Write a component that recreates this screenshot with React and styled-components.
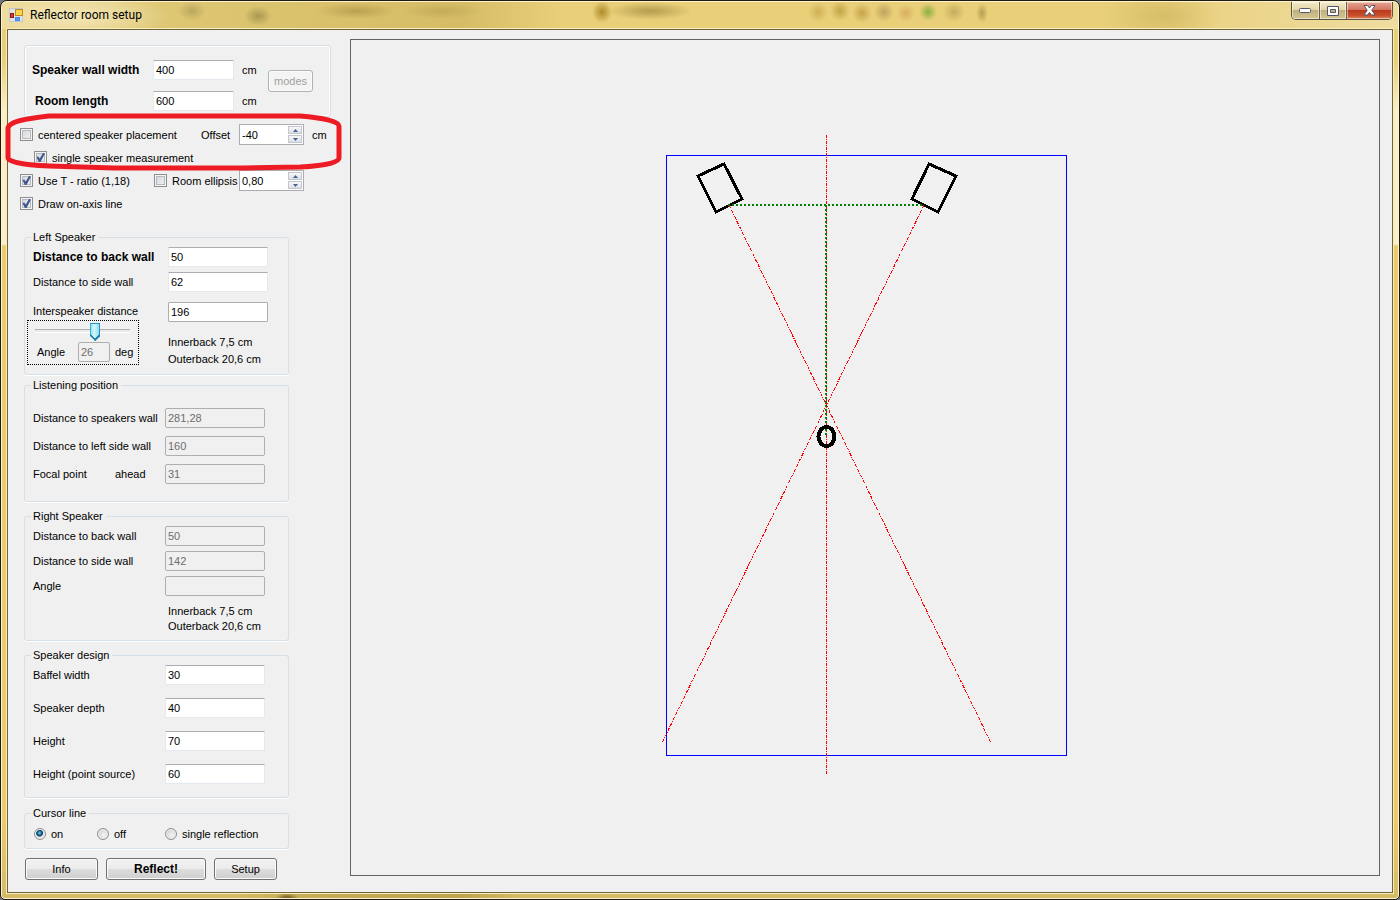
import React, {useState} from 'react'
import styled, {createGlobalStyle} from 'styled-components'

const colors = {
    face: '#f0f0f0',
    groupLine: '#d5dfe5',
    inputTop: '#abadb3',
    inputSide: '#e3e9ef',
    disabledLine: '#afafaf',
    disabledText: '#6d6d6d',
    marker: '#ed1c24',
    canvasLine: '#646464',
}

const GlobalStyle = createGlobalStyle`
  * {
    box-sizing: border-box;
  }

  body {
    margin: 0;
    background: #6f7780;
    font-family: "Liberation Sans", Arial, sans-serif;
    font-size: 11px;
    line-height: 14px;
    color: #000;
  }

  input, button {
    font: inherit;
    color: inherit;
    margin: 0;
  }
`

const Window = styled.div`
  display: flex;
  flex-direction: column;
  min-height: 100vh;
  padding: 0 6px 6px;
  border: 1px solid #1f1b10;
  border-radius: 7px 7px 5px 5px;
  box-shadow: inset 0 0 0 1px #fdf3d0;
  background:
    radial-gradient(ellipse 12px 6px at 286px 100%, #5e4a14, transparent),
    linear-gradient(90deg, transparent 230px, #c9ae58 290px, #bfa34f 460px, transparent 520px) 0 100% / 100% 7px no-repeat,
    linear-gradient(#e6cd7a 0, #e9d07a 60px, #fbeecb 110px, #fbeecb 243px, #eccb6e 245px, #eccb6e 820px, #d5bb66 100%);
`
// glass caption, what lies behind the window shows through as faint spots
const TitleBar = styled.header`
  display: flex;
  align-items: flex-start;
  height: 28px;
  margin: 0 -5px;
  padding: 0 5px 0 6px;
  border-radius: 6px 6px 0 0;
  border-top: 1px solid #fdf3d0;
  background:
    radial-gradient(ellipse 100px 26px at 70px 14px, #f3e6b8, rgba(243, 230, 184, 0)),
    radial-gradient(ellipse 14px 10px at 190px 9px, rgba(120, 110, 60, 0.35), transparent),
    radial-gradient(ellipse 14px 10px at 256px 14px, rgba(110, 100, 50, 0.45), transparent),
    radial-gradient(ellipse 40px 8px at 354px 9px, rgba(130, 105, 40, 0.35), transparent),
    radial-gradient(ellipse 40px 8px at 440px 9px, rgba(130, 105, 40, 0.2), transparent),
    radial-gradient(ellipse 10px 11px at 600px 10px, rgba(150, 110, 10, 0.7), transparent),
    radial-gradient(ellipse 42px 9px at 648px 9px, rgba(130, 105, 40, 0.5), transparent),
    radial-gradient(ellipse 10px 10px at 816px 10px, rgba(160, 120, 20, 0.35), transparent),
    radial-gradient(ellipse 10px 10px at 838px 9px, rgba(160, 120, 20, 0.5), transparent),
    radial-gradient(ellipse 10px 10px at 860px 11px, rgba(160, 110, 20, 0.45), transparent),
    radial-gradient(ellipse 10px 10px at 882px 10px, rgba(140, 110, 60, 0.45), transparent),
    radial-gradient(ellipse 9px 9px at 904px 11px, rgba(190, 110, 50, 0.35), transparent),
    radial-gradient(ellipse 9px 9px at 926px 10px, rgba(100, 160, 40, 0.7), transparent),
    radial-gradient(ellipse 11px 10px at 952px 10px, rgba(130, 110, 50, 0.35), transparent),
    radial-gradient(ellipse 6px 10px at 980px 11px, rgba(130, 110, 40, 0.5), transparent),
    radial-gradient(ellipse 60px 30px at 1160px 14px, #d6bd66, rgba(214, 189, 102, 0)),
    linear-gradient(90deg, #ecd995, #dec773 160px, #d5bc65 460px, #e8cf78 560px, #e8cf78 1100px, #efdca0);
`
const AppIcon = styled.svg`
  width: 16px;
  height: 16px;
  margin: 5px 5px 0 1px;
`
const Title = styled.h1`
  flex: 1;
  margin: 4px 0 0;
  font-family: Roboto, sans-serif;
  font-weight: normal;
  font-size: 12px;
  line-height: 18px;
`
const WindowButtons = styled.div`
  display: flex;
  height: 18px;
  border: 1px solid #5c5540;
  border-top: 0;
  border-radius: 0 0 5px 5px;
  overflow: hidden;
`
const WindowButton = styled.button`
  display: flex;
  align-items: center;
  justify-content: center;
  width: ${(props) => props.$close ? '46px' : '27px'};
  padding: 0;
  border: 0;
  border-left: ${(props) => props.$first ? '0' : '1px solid #6b6042'};
  box-shadow: inset 0 0 0 1px rgba(255, 255, 255, 0.5);
  background: ${(props) => props.$close
      ? 'linear-gradient(#e5a594, #d47560 45%, #b93a1d 50%, #c9502d 80%, #e08a60)'
      : 'linear-gradient(#f3e9c9, #e3d5a6 45%, #bfb07c 50%, #d5c794)'};
`

const Client = styled.main`
  flex: 1;
  display: flex;
  border: 1px solid #6f6534;
  box-shadow: 0 0 0 1px #f8ecc0;
  background: ${colors.face};
`
const Sidebar = styled.form`
  flex: none;
  width: 342px;
  padding: 15px 0 12px 12px;
`
const RoomBox = styled.section`
  display: flex;
  align-items: center;
  width: 307px;
  height: 72px;
  margin-left: 4px;
  padding-left: 7px;
  border: 1px solid ${colors.groupLine};
  border-radius: 3px;
  box-shadow: inset 0 0 0 1px #fff;
`
const RoomFields = styled.div`
  display: grid;
  grid-template-columns: 121px 81px 34px;
  align-items: center;
  row-gap: 11px;
  padding-top: 8px;
`
const Unit = styled.span`
  padding-left: 8px;
`
const Label = styled.label`
  font-size: ${(props) => props.$bold ? '12px' : '11px'};
  font-weight: ${(props) => props.$bold ? 'bold' : 'normal'};
  padding-left: ${(props) => props.$indent ? '3px' : '0'};
  white-space: nowrap;
`
const TextBox = styled.input`
  width: ${(props) => props.$width || '100px'};
  height: 20px;
  padding: 0 2px;
  border: 1px solid ${colors.inputSide};
  border-top-color: ${colors.inputTop};
  border-radius: 1px;
  background: #fff;
  ${(props) => props.$strong && `border-color: ${colors.inputTop};`}

  &:disabled {
    border-color: ${colors.disabledLine};
    border-radius: 2px;
    background: ${colors.face};
    color: ${colors.disabledText};
  }
`
const Button = styled.button`
  width: ${(props) => props.$width};
  height: 22px;
  padding: 0;
  border: 1px solid #707070;
  border-radius: 3px;
  box-shadow: inset 0 0 0 1px #fbfbfb;
  background: linear-gradient(#f2f2f2, #ebebeb 50%, #dddddd 50%, #cfcfcf);
  font-size: ${(props) => props.$bold ? '12px' : '11px'};
  font-weight: ${(props) => props.$bold ? 'bold' : 'normal'};

  &:disabled {
    border-color: #adb2b5;
    background: #f4f4f4;
    color: #a0a0a0;
  }
`

const Options = styled.section`
  position: relative;
  padding-top: 6px;
`
const OptionRow = styled.div`
  display: flex;
  align-items: center;
  height: 23px;
  padding-left: ${(props) => props.$indent ? '14px' : '0'};
`
const CheckLabel = styled.label`
  display: flex;
  align-items: center;
  gap: 5px;
  width: ${(props) => props.$width || 'auto'};
  white-space: nowrap;
`
const CheckBox = styled.input.attrs({type: 'checkbox'})`
  appearance: none;
  flex: none;
  width: 13px;
  height: 13px;
  border: 1px solid #8e8f8f;
  box-shadow: inset 0 0 0 1px #f4f4f4, inset 0 0 0 2px #b5bac0;
  background: linear-gradient(135deg, #cfd3d8, #f6f6f6);

  &:checked::after {
    content: '';
    display: block;
    width: 9px;
    height: 9px;
    margin: 1px;
    background: #42568f;
    clip-path: polygon(5% 45%, 25% 40%, 42% 62%, 78% 0, 100% 5%, 50% 100%, 32% 100%);
  }
`
const OffsetLabel = styled.label`
  width: 38px;
`
const SpinBox = styled.div`
  display: flex;
  width: 65px;
  height: 21px;
  padding: 1px;
  border: 1px solid ${colors.inputTop};
  background: #fff;
`
const SpinInput = styled.input`
  flex: 1;
  min-width: 0;
  padding: 0 1px;
  border: 0;
  background: transparent;
`
const SpinButtons = styled.div`
  display: flex;
  flex-direction: column;
  gap: 1px;
  width: 14px;
`
const SpinButton = styled.button`
  flex: 1;
  display: flex;
  align-items: center;
  justify-content: center;
  padding: 0;
  border: 1px solid #c3c6cb;
  background: linear-gradient(#f8f8f8, #dcdfe4);
`
// hand drawn marker around the offset rows
const Marker = styled.svg`
  position: absolute;
  top: -5px;
  left: -16px;
  width: 340px;
  height: 60px;
  pointer-events: none;
`

const Group = styled.fieldset`
  width: 265px;
  min-height: ${(props) => props.$height};
  margin: ${(props) => props.$gap} 0 0 4px;
  padding: 0 0 0 2px;
  border: 1px solid ${colors.groupLine};
  border-radius: 3px;
  box-shadow: 0 1px 0 #fff;
`
const Legend = styled.legend`
  margin-left: 4px;
  padding: 0 3px 0 2px;
  line-height: 14px;
`
const Fields = styled.div`
  display: grid;
  grid-template-columns: ${(props) => props.$labelWidth || '132px'} 100px;
  align-items: center;
  row-gap: ${(props) => props.$gap || '5px'};
  padding: ${(props) => props.$top || '3px'} 0 0 6px;
`
const SplitLabel = styled.div`
  display: grid;
  grid-template-columns: 82px auto;
`
const Interspeaker = styled.div`
  display: flex;
  justify-content: space-between;
  width: 241px;
  padding-top: 10px;
`
const AngleColumn = styled.div`
  display: flex;
  flex-direction: column;
  width: 112px;

  > label {
    padding-left: 6px;
    line-height: 18px;
  }
`
const AnglePanel = styled.div`
  height: 45px;
  padding: 1px 7px 0;
  border: 1px dotted #000;
`
const AngleRow = styled.div`
  display: grid;
  grid-template-columns: 41px 37px auto;
  align-items: center;
  padding-left: 2px;
`
const Slider = styled.input.attrs({type: 'range'})`
  appearance: none;
  display: block;
  width: 95px;
  height: 20px;
  background: linear-gradient(#b0b0b0, #b0b0b0 1px, #e7eaea 1px, #e7eaea 3px, #fff 3px) 0 7px / 100% 4px no-repeat;

  &::-webkit-slider-thumb {
    appearance: none;
    width: 10px;
    height: 18px;
    background:
      linear-gradient(45deg, #1f7fb0 5px, transparent 5px),
      linear-gradient(315deg, #1f7fb0 5px, transparent 5px),
      linear-gradient(90deg, #2b8fc0 1px, #7fe9f7 1px, #d9f6fc 4px, #8bdcf2 9px, #2b8fc0 9px);
    box-shadow: inset 0 1px 0 #2b8fc0;
    clip-path: polygon(0 0, 100% 0, 100% 13px, 50% 100%, 0 13px);
  }
`
const BackNotes = styled.div`
  grid-column: 2;
  padding: ${(props) => props.$top || '0'} 0 0 ${(props) => props.$indent || '0'};
  line-height: ${(props) => props.$line};
  white-space: nowrap;
`
const RadioRow = styled.div`
  display: grid;
  grid-template-columns: 63px 68px auto;
  padding: 7px 0 0 7px;
`
const Radio = styled.input.attrs({type: 'radio'})`
  appearance: none;
  width: 12px;
  height: 12px;
  border: 1px solid #8e8f8f;
  border-radius: 50%;
  box-shadow: inset 0 0 0 1px #f4f4f4;
  background: radial-gradient(circle at 60% 60%, #f4f4f4, #c2c6ca);

  &:checked {
    background: radial-gradient(circle at 45% 40%, #6fd0f5 0, #1a6c9e 2px, #0f3554 3px, #dfe4e8 4px);
  }
`
const ButtonRow = styled.div`
  display: flex;
  gap: 8px;
  padding: 9px 0 0 5px;
`

const CanvasPane = styled.section`
  flex: 1;
  display: flex;
  min-width: 0;
  margin: 9px 12px 16px 0;
  border: 1px solid ${colors.canvasLine};
`
const RoomPlot = styled.svg`
  flex: 1;
  width: 100%;
  min-width: 0;
`

const Spinner = ({id, initial, step, digits}) => {
    const [value, setValue] = useState(initial)

    const change = (delta) => {
        const next = parseFloat(value.replace(',', '.')) + delta
        setValue(next.toFixed(digits).replace('.', ','))
    }

    return (
        <SpinBox>
            <SpinInput
                id={id}
                aria-label={id}
                value={value}
                onChange={(e) => setValue(e.target.value)}
            />
            <SpinButtons>
                <SpinButton type="button" aria-label="Increase" onClick={() => change(step)}>
                    <svg width="5" height="3"><path d="M0 3L2.5 0L5 3z" fill="#4a5f97"/></svg>
                </SpinButton>
                <SpinButton type="button" aria-label="Decrease" onClick={() => change(-step)}>
                    <svg width="5" height="3"><path d="M0 0L2.5 3L5 0z" fill="#4a5f97"/></svg>
                </SpinButton>
            </SpinButtons>
        </SpinBox>
    )
}

const Field = ({id, label, value, bold, disabled}) => (
    <>
        <Label htmlFor={id} $bold={bold}>{label}</Label>
        <TextBox id={id} defaultValue={value} disabled={disabled}/>
    </>
)

const TitleIcons = {
    app: (
        <AppIcon viewBox="0 0 16 16">
            <rect x="0.5" y="1.5" width="13" height="13" fill="#dfe3ea" stroke="#c3c8d0"/>
            <rect x="6.5" y="2.5" width="7" height="6" fill="#fbd54a" stroke="#c28a14"/>
            <rect x="1.5" y="6.5" width="3" height="4" fill="#d8402a" stroke="#8f1c10"/>
            <rect x="6.5" y="10.5" width="4" height="3" fill="#5b9bf0" stroke="#4a86e0"/>
        </AppIcon>
    ),
    minimize: (
        <svg width="13" height="6">
            <rect x="0.5" y="0.5" width="11" height="4" rx="1" fill="#fff" stroke="#535666"/>
        </svg>
    ),
    maximize: (
        <svg width="12" height="10">
            <path
                d="M0.5 0.5h11v9h-11zM3.5 3.5v3h5v-3z"
                fill="#fff"
                fillRule="evenodd"
                stroke="#535666"
            />
        </svg>
    ),
    close: (
        <svg width="13" height="11">
            <path
                d="M1 0.5h3.5l2 2.5l2-2.5h3.5l-3.2 4.7l3.2 4.8h-3.5l-2-2.6l-2 2.6h-3.5l3.2-4.8z"
                fill="#fff"
                stroke="#535666"
            />
        </svg>
    ),
}

// one unit of the plot is one centimetre, origin in the upper left room corner
const Plot = () => (
    <RoomPlot viewBox="-315 -115 1028 835" fill="none" shapeRendering="crispEdges">
        <rect x="0.5" y="0.5" width="400" height="600" stroke="#0000ff"/>
        <path d="M32 21L58 9L76 44L50 57z" stroke="#000" strokeWidth="3"/>
        <path d="M263 9L290 21L272 57L246 44z" stroke="#000" strokeWidth="3"/>
        <path d="M62 50H258" stroke="#008000" strokeWidth="2" strokeDasharray="2 2"/>
        <g stroke="#ff0000" strokeDasharray="3 1 1 1">
            <path d="M160.5 -20V619"/>
            <path d="M63 50L325 588"/>
            <path d="M258 50L-4 588"/>
        </g>
        <path d="M160 50V281" stroke="#008000" strokeWidth="2" strokeDasharray="2 2"/>
        <ellipse cx="160.5" cy="281.5" rx="8" ry="9.5" stroke="#000" strokeWidth="4"/>
    </RoomPlot>
)

const App = () => {
    const [angle, setAngle] = useState(26)

    return (
        <>
            <GlobalStyle/>
            <Window>
                <TitleBar>
                    {TitleIcons.app}
                    <Title>Reflector room setup</Title>
                    <WindowButtons>
                        <WindowButton $first aria-label="Minimize">{TitleIcons.minimize}</WindowButton>
                        <WindowButton aria-label="Maximize">{TitleIcons.maximize}</WindowButton>
                        <WindowButton $close aria-label="Close">{TitleIcons.close}</WindowButton>
                    </WindowButtons>
                </TitleBar>
                <Client>
                    <Sidebar onSubmit={(e) => e.preventDefault()}>
                        <RoomBox>
                            <RoomFields>
                                <Label htmlFor="wallWidth" $bold>Speaker wall width</Label>
                                <TextBox id="wallWidth" defaultValue="400" $width="81px"/>
                                <Unit>cm</Unit>
                                <Label htmlFor="roomLength" $bold $indent>Room length</Label>
                                <TextBox id="roomLength" defaultValue="600" $width="81px"/>
                                <Unit>cm</Unit>
                            </RoomFields>
                            <Button type="button" $width="45px" disabled>modes</Button>
                        </RoomBox>
                        <Options>
                            <OptionRow>
                                <CheckLabel $width="181px"><CheckBox/>centered speaker placement</CheckLabel>
                                <OffsetLabel htmlFor="offset">Offset</OffsetLabel>
                                <Spinner id="offset" initial="-40" step={1} digits={0}/>
                                <Unit>cm</Unit>
                            </OptionRow>
                            <OptionRow $indent>
                                <CheckLabel><CheckBox defaultChecked/>single speaker measurement</CheckLabel>
                            </OptionRow>
                            <OptionRow>
                                <CheckLabel $width="134px"><CheckBox defaultChecked/>Use T - ratio (1,18)</CheckLabel>
                                <CheckLabel $width="85px"><CheckBox/>Room ellipsis</CheckLabel>
                                <Spinner id="ellipsis" initial="0,80" step={0.01} digits={2}/>
                            </OptionRow>
                            <OptionRow>
                                <CheckLabel><CheckBox defaultChecked/>Draw on-axis line</CheckLabel>
                            </OptionRow>
                            <Marker viewBox="0 0 340 60" fill="none">
                                <path
                                    d="M4 16C5 10 18 7 45 4H296C318 6 335 9 335 14V46C335 51 318 54 296 55L240 56H110L45 54C22 53 4 50 4 46z"
                                    stroke={colors.marker}
                                    strokeWidth="5"
                                />
                            </Marker>
                        </Options>

                        <Group $height="145px" $gap="15px">
                            <Legend>Left Speaker</Legend>
                            <Fields $labelWidth="135px">
                                <Field id="leftBack" label="Distance to back wall" value="50" bold/>
                                <Field id="leftSide" label="Distance to side wall" value="62"/>
                            </Fields>
                            <Interspeaker>
                                <AngleColumn>
                                    <Label htmlFor="interspeaker">Interspeaker distance</Label>
                                    <AnglePanel>
                                        <Slider
                                            aria-label="Angle"
                                            min="0"
                                            max="40"
                                            value={angle}
                                            onChange={(e) => setAngle(e.target.value)}
                                        />
                                        <AngleRow>
                                            <Label htmlFor="leftAngle">Angle</Label>
                                            <TextBox id="leftAngle" value={angle} readOnly disabled $width="32px"/>
                                            <span>deg</span>
                                        </AngleRow>
                                    </AnglePanel>
                                </AngleColumn>
                                <div>
                                    <TextBox id="interspeaker" defaultValue="196" $strong/>
                                    <BackNotes $line="17px" $top="12px">
                                        Innerback 7,5 cm<br/>Outerback 20,6 cm
                                    </BackNotes>
                                </div>
                            </Interspeaker>
                        </Group>

                        <Group $height="124px" $gap="3px">
                            <Legend>Listening position</Legend>
                            <Fields $top="16px" $gap="8px">
                                <Field id="speakersWall" label="Distance to speakers wall" value="281,28" disabled/>
                                <Field id="leftSideWall" label="Distance to left side wall" value="160" disabled/>
                                <SplitLabel>
                                    <Label htmlFor="focal">Focal point</Label>
                                    <span>ahead</span>
                                </SplitLabel>
                                <TextBox id="focal" defaultValue="31" disabled/>
                            </Fields>
                        </Group>

                        <Group $height="132px" $gap="7px">
                            <Legend>Right Speaker</Legend>
                            <Fields>
                                <Field id="rightBack" label="Distance to back wall" value="50" disabled/>
                                <Field id="rightSide" label="Distance to side wall" value="142" disabled/>
                                <Field id="rightAngle" label="Angle" value="" disabled/>
                                <BackNotes $line="15px" $top="3px" $indent="3px">
                                    Innerback 7,5 cm<br/>Outerback 20,6 cm
                                </BackNotes>
                            </Fields>
                        </Group>

                        <Group $height="150px" $gap="7px">
                            <Legend>Speaker design</Legend>
                            <Fields $gap="13px">
                                <Field id="baffel" label="Baffel width" value="30"/>
                                <Field id="depth" label="Speaker depth" value="40"/>
                                <Field id="height" label="Height" value="70"/>
                                <Field id="pointSource" label="Height (point source)" value="60"/>
                            </Fields>
                        </Group>

                        <Group $height="43px" $gap="8px">
                            <Legend>Cursor line</Legend>
                            <RadioRow>
                                <CheckLabel><Radio name="cursor" defaultChecked/>on</CheckLabel>
                                <CheckLabel><Radio name="cursor"/>off</CheckLabel>
                                <CheckLabel><Radio name="cursor"/>single reflection</CheckLabel>
                            </RadioRow>
                        </Group>

                        <ButtonRow>
                            <Button type="button" $width="73px">Info</Button>
                            <Button type="submit" $width="100px" $bold>Reflect!</Button>
                            <Button type="button" $width="63px">Setup</Button>
                        </ButtonRow>
                    </Sidebar>
                    <CanvasPane>
                        <Plot/>
                    </CanvasPane>
                </Client>
            </Window>
        </>
    )
}

export default App
